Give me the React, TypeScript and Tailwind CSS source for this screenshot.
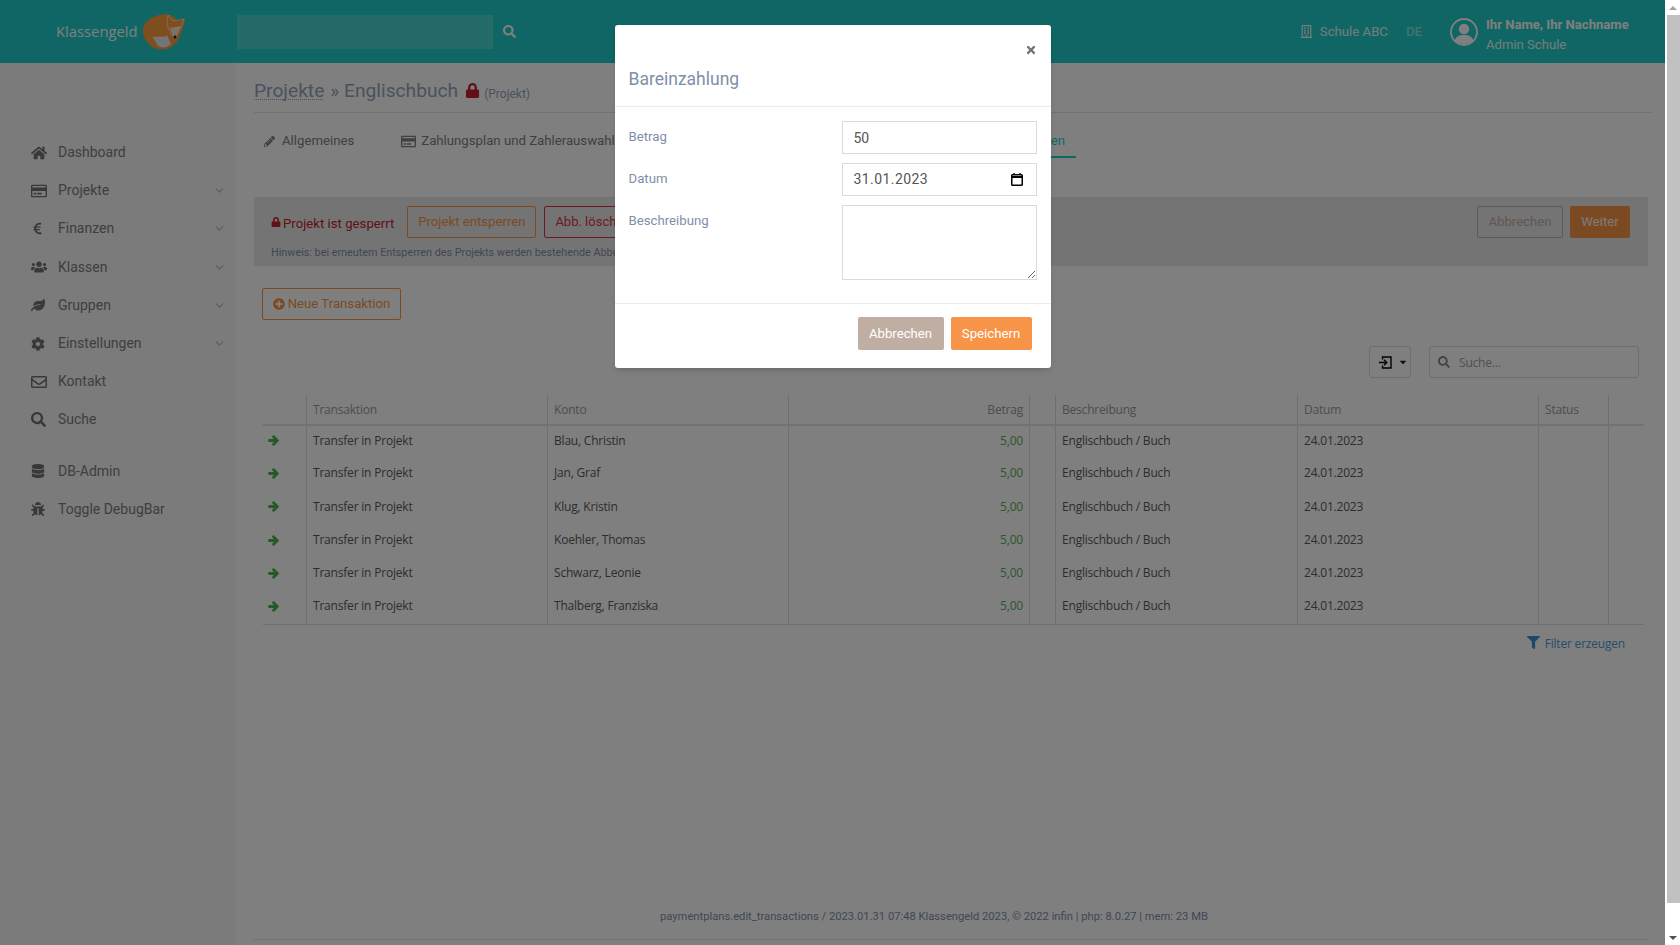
import type { ReactNode } from "react";
import { ChevronDown } from "lucide-react";
import {
  FaArrowRight,
  FaBug,
  FaCaretDown,
  FaCog,
  FaDatabase,
  FaEuroSign,
  FaFilter,
  FaHome,
  FaLeaf,
  FaLock,
  FaPencilAlt,
  FaPlusCircle,
  FaRegBuilding,
  FaRegCreditCard,
  FaRegEnvelope,
  FaSearch,
  FaTimes,
  FaUsers,
} from "react-icons/fa";

const ROBOTO = "font-['Roboto',sans-serif]";

const NAV: { label: string; icon: ReactNode; arrow?: boolean; gap?: boolean }[] = [
  { label: "Dashboard", icon: <FaHome size={16} /> },
  { label: "Projekte", icon: <FaRegCreditCard size={16} />, arrow: true },
  { label: "Finanzen", icon: <FaEuroSign size={13} />, arrow: true },
  { label: "Klassen", icon: <FaUsers size={16} />, arrow: true },
  { label: "Gruppen", icon: <FaLeaf size={14} />, arrow: true },
  { label: "Einstellungen", icon: <FaCog size={14} />, arrow: true },
  { label: "Kontakt", icon: <FaRegEnvelope size={16} /> },
  { label: "Suche", icon: <FaSearch size={15} /> },
  { label: "DB-Admin", icon: <FaDatabase size={14} />, gap: true },
  { label: "Toggle DebugBar", icon: <FaBug size={14} /> },
];

const ROWS = [
  "Blau, Christin",
  "Jan, Graf",
  "Klug, Kristin",
  "Koehler, Thomas",
  "Schwarz, Leonie",
  "Thalberg, Franziska",
];

function FoxLogo() {
  return (
    <svg width="44" height="38" viewBox="0 0 44 38" className="ml-[5px]">
      <path d="M14 3 C24 -1 33 2 35 8 L43 5 C42 14 39 24 33 31 C26 38 15 38 9 33 C3 28 0 22 1 16 C2 10 7 5 14 3 Z" fill="#ff9c3c" />
      <path d="M26 2 L31 8 L42 6 L38 16 L33 25 L29 21 L25 12 Z" fill="#ff9c3c" stroke="#fff" strokeOpacity="0.6" strokeWidth="1" />
      <path d="M28 15 L39 13 L34 25 L31 24 Z" fill="#f7e6d0" />
      <path d="M10 24 C17 22 22 26 25 22 L29 31 C24 36 18 35 15 32 C14 28 12 26 10 24 Z" fill="#e8e8e8" />
      <circle cx="33" cy="24" r="1.4" fill="#222" />
    </svg>
  );
}

function Avatar() {
  return (
    <svg width="28" height="28" viewBox="0 0 28 28">
      <circle cx="14" cy="14" r="13" fill="none" stroke="#ffffff" strokeWidth="1.8" />
      <circle cx="14" cy="11" r="5.2" fill="#ffffff" />
      <path d="M4.5 23 C6 18 9 17 14 17 C19 17 22 18 23.5 23 C20 27 8 27 4.5 23 Z" fill="#ffffff" />
    </svg>
  );
}

function ExportIcon() {
  return (
    <svg width="13" height="13" viewBox="0 0 13 13" fill="none" stroke="#000" strokeWidth="1.4">
      <path d="M3.5 3.5 V1 H12 V12 H3.5 V9.5" />
      <path d="M0 6.5 H7.5 M5 3.8 L7.8 6.5 L5 9.2" />
    </svg>
  );
}

function Header() {
  return (
    <header className="flex h-[63px] shrink-0 items-center bg-[#1eccc8] text-white">
      <span className="ml-[56px] w-[81px] font-['Open_Sans',sans-serif] text-[14.8px] text-white">Klassengeld</span>
      <FoxLogo />
      <div className="ml-[51px] h-[34px] w-[256px] bg-white/20" />
      <FaSearch size={13} className="ml-[10px] text-white" />
      <div className="ml-auto flex items-center">
        <FaRegBuilding size={13} className="text-white/90" />
        <span className="ml-[7px] text-[13.2px] text-white/90">Schule ABC</span>
        <span className="ml-[18px] text-[13.2px] font-medium text-white/50">DE</span>
        <span className="ml-[28px]">
          <Avatar />
        </span>
        <div className="ml-[8px] mr-[37px] flex w-[142px] flex-col gap-[2px] whitespace-nowrap pt-[6px] text-[13.1px] leading-[18px]">
          <span className="font-bold text-white">Ihr Name, Ihr Nachname</span>
          <span className="text-white/90">Admin Schule</span>
        </div>
      </div>
    </header>
  );
}

function Sidebar() {
  return (
    <aside className="w-[236px] shrink-0 bg-[#f6f6f6] pt-[70.5px] text-[#7e7e7e]">
      {NAV.map((item) => (
        <div key={item.label} className={`flex h-[38.2px] items-center pl-[31px] pr-[8px] text-[14px] ${item.gap ? "mt-[13px]" : ""}`}>
          <span className="flex w-[27px] shrink-0 items-center text-[#727272]">{item.icon}</span>
          <span>{item.label}</span>
          {item.arrow && <ChevronDown size={13} strokeWidth={2.5} className="ml-auto mr-[2px] text-[#bbbbbb]" />}
        </div>
      ))}
    </aside>
  );
}

function LockBanner() {
  return (
    <div className="relative mt-[39px] h-[69px] bg-[#e9e9e9] px-[17px] pt-[9px]">
      <div className="flex items-center">
        <FaLock size={10} className="text-[#c0202c]" />
        <span className="ml-[2px] mt-[3px] text-[13.2px] text-[#c0202c]">Projekt ist gesperrt</span>
        <button className="ml-[13px] h-[32px] w-[129px] rounded-[2px] border border-[#f79447] text-[13.2px] text-[#f79447]">Projekt entsperren</button>
        <button className="ml-[8px] h-[32px] whitespace-nowrap rounded-[2px] border border-[#d9343f] px-[10px] text-[13px] text-[#d9343f]">Abb. löschen</button>
        <button className="ml-auto h-[32px] w-[86px] rounded-[2px] border border-[#c0aea3] text-[13.2px] text-[#c0aea3]">Abbrechen</button>
        <button className="ml-[7px] mr-[1px] h-[32px] w-[60px] rounded-[2px] bg-[#f79447] text-[13.2px] text-white/90">Weiter</button>
      </div>
      <p className="mt-[7px] text-[10.8px] leading-[15px] text-[#7e8fa8]">
        Hinweis: bei erneutem Entsperren des Projekts werden bestehende Abbuchungen nicht wiederhergestellt.
      </p>
    </div>
  );
}

function TransactionTable() {
  const td = "border-l border-[#dcdcdc] pb-[3px] pl-[6px] text-[#5a5a5a]";
  const th = "border-l border-[#dcdcdc] pl-[6px] pt-[1px] text-left font-normal text-[#9a9a9a]";
  return (
    <table className="ml-[8.5px] mt-[17px] w-[1381px] table-fixed border-collapse font-['Open_Sans',sans-serif] text-[12px] tracking-[-0.2px]">
      <colgroup>
        <col className="w-[44px]" />
        <col className="w-[241px]" />
        <col className="w-[241px]" />
        <col className="w-[241px]" />
        <col className="w-[26px]" />
        <col className="w-[242px]" />
        <col className="w-[241px]" />
        <col className="w-[70px]" />
        <col className="w-[35px]" />
      </colgroup>
      <thead>
        <tr className="h-[30px] border-b-2 border-[#e2e2e2]">
          <th />
          <th className={th}>Transaktion</th>
          <th className={th}>Konto</th>
          <th className={`${th} pr-[6px] text-right`}>Betrag</th>
          <th className={th} />
          <th className={th}>Beschreibung</th>
          <th className={th}>Datum</th>
          <th className={th}>Status</th>
          <th className={th} />
        </tr>
      </thead>
      <tbody className="border-b border-[#dcdcdc]">
        {ROWS.map((name) => (
          <tr key={name} className="h-[33.3px]">
            <td className="pb-[3px] pl-[5px]">
              <FaArrowRight size={11} stroke="currentColor" strokeWidth={50} className="text-[#4fb04f]" />
            </td>
            <td className={td}>Transfer in Projekt</td>
            <td className={td}>{name}</td>
            <td className={`${td} pr-[6px] text-right text-[#5cae5c]`}>5,00</td>
            <td className={td} />
            <td className={td}>Englischbuch / Buch</td>
            <td className={td}>24.01.2023</td>
            <td className={td} />
            <td className={td} />
          </tr>
        ))}
      </tbody>
    </table>
  );
}

function Content() {
  return (
    <main className="flex min-w-0 flex-1 flex-col pl-[18px]">
      <div className="mr-[13px] flex h-[50px] items-center border-b border-[#e3e3e3] pt-[8px] text-[#93a4bb]">
        <span className="text-[19.2px] underline decoration-dotted decoration-1 underline-offset-2">Projekte</span>
        <span className="ml-[6px] text-[19.2px]">» Englischbuch</span>
        <FaLock size={15} className="ml-[7px] mb-[2px] text-[#c0202c]" />
        <span className="ml-[4px] mt-[5px] text-[12px]">(Projekt)</span>
      </div>

      <div className="relative mt-[17px] flex h-[28px] text-[13.2px] text-[#7e7e7e]">
        <div className="ml-[10px] flex items-center pb-[6px]">
          <FaPencilAlt size={11} />
          <span className="ml-[7px]">Allgemeines</span>
        </div>
        <div className="ml-[47px] flex items-center pb-[6px]">
          <FaRegCreditCard size={15} />
          <span className="ml-[5px]">Zahlungsplan und Zahlerauswahl</span>
        </div>
        <div className="absolute left-[780px] top-0 flex h-[28px] w-[42px] justify-end border-b-2 border-[#1eccc8] pr-[11px] pt-[1px] text-[#1eccc8]">en</div>
      </div>

      <div className="mr-[17px]">
        <LockBanner />
      </div>

      <div className="ml-[8px] mt-[22px]">
        <button className="flex h-[32px] w-[139px] items-center justify-center gap-[3px] rounded-[2px] border border-[#f79447] text-[13.2px] text-[#f79447]">
          <FaPlusCircle size={12} />
          Neue Transaktion
        </button>
      </div>

      <div className="mr-[26px] mt-[26px] flex h-[32px] justify-end">
        <button className="flex w-[42px] items-center justify-center gap-[6px] rounded-[3px] border border-[#dcdcdc] pl-[6px]">
          <ExportIcon />
          <FaCaretDown size={10} className="text-[#222222]" />
        </button>
        <div className="ml-[18px] flex w-[210px] items-center rounded-[3px] border border-[#dcdcdc] pl-[8px] text-[13px] text-[#a0a0a0]">
          <FaSearch size={12} className="text-[#8a8a8a]" />
          <span className="ml-[9px] mt-[1px] font-['Open_Sans',sans-serif] text-[12px] tracking-[-0.2px]">Suche...</span>
        </div>
      </div>

      <TransactionTable />

      <div className="mr-[40px] mt-[9px] flex items-center justify-end font-['Open_Sans',sans-serif] text-[12px] tracking-[-0.2px] text-[#4a9bd8]">
        <FaFilter size={13} className="mb-[2px] text-[#3f8fd0]" />
        <span className="ml-[5px] mt-[1px]">Filter erzeugen</span>
      </div>

      <footer className="mr-[17px] mt-auto h-[30px] border-b border-[#e3e3e3] pl-[406px] text-[11.2px] leading-[14px] text-[#7e8fa8]">
        paymentplans.edit_transactions / 2023.01.31 07:48 Klassengeld 2023, © 2022 infin | php: 8.0.27 | mem: 23 MB
      </footer>
      <div className="h-[5px] shrink-0" />
    </main>
  );
}

function Field({ label, children }: { label: string; children: ReactNode }) {
  return (
    <div className="flex">
      <label className="w-[213px] shrink-0 pt-[7px] text-[13.2px] leading-[18px] text-[#7e8fa8]">{label}</label>
      {children}
    </div>
  );
}

function CalendarIcon() {
  return (
    <svg width="12" height="13" viewBox="0 0 12 13" fill="none" stroke="#000">
      <rect x="0.75" y="1.75" width="10.5" height="10.5" rx="0.8" strokeWidth="1.5" />
      <path d="M0.75 4 H11.25" strokeWidth="2" />
      <path d="M3 0 V2 M9 0 V2" strokeWidth="1.3" />
    </svg>
  );
}

function PaymentModal() {
  const box = "w-[195px] border border-[#d5dbe3] text-[14px] text-[#555555]";
  return (
    <div className="absolute inset-0 flex justify-center bg-black/50 pt-[25px]">
      <div className="h-[343px] w-[436px] rounded-[3px] bg-white shadow-md">
        <div className="relative h-[82px] border-b border-[#e9ecef] pl-[14px] pt-[42px]">
          <h2 className="text-[17.5px] leading-[24px] text-[#7e8fa8]">Bareinzahlung</h2>
          <FaTimes size={12} className="absolute right-[14px] top-[19px] text-[#6f6f6f]" />
        </div>
        <div className="flex h-[197px] flex-col gap-[9px] border-b border-[#e9ecef] pl-[14px] pt-[14px]">
          <Field label="Betrag">
            <input readOnly value="50" className={`${box} h-[33px] px-[11px] outline-none`} />
          </Field>
          <Field label="Datum">
            <div className={`${box} flex h-[33px] items-center justify-between pl-[11px] pr-[13px] tracking-[0.42px]`}>
              31.01.2023
              <CalendarIcon />
            </div>
          </Field>
          <Field label="Beschreibung">
            <textarea readOnly className={`${box} h-[75px] outline-none`} />
          </Field>
        </div>
        <div className="flex justify-end gap-[7px] pr-[19px] pt-[13px]">
          <button className="h-[33px] w-[86px] rounded-[2px] bg-[#c0aea3] text-[13.2px] text-white">Abbrechen</button>
          <button className="h-[33px] w-[81px] rounded-[2px] bg-[#f79447] text-[13.2px] text-white">Speichern</button>
        </div>
      </div>
    </div>
  );
}

function Scrollbar() {
  return (
    <div className="flex w-[15px] shrink-0 flex-col bg-white">
      <div className="flex h-[15px] items-center justify-center">
        <div className="h-0 w-0 border-x-[4px] border-b-[4px] border-x-transparent border-b-[#a3a3a3]" />
      </div>
      <div className="ml-[2px] h-[888px] bg-[#c1c1c1]" />
      <div className="mt-auto flex h-[15px] items-center justify-center">
        <div className="h-0 w-0 border-x-[4px] border-t-[4px] border-x-transparent border-t-[#505050]" />
      </div>
    </div>
  );
}

export default function App() {
  return (
    <div className={`flex h-[945px] w-[1680px] overflow-hidden bg-white ${ROBOTO}`}>
      <div className="relative flex min-w-0 flex-1 flex-col">
        <Header />
        <div className="flex min-h-0 flex-1">
          <Sidebar />
          <Content />
        </div>
        <PaymentModal />
      </div>
      <Scrollbar />
    </div>
  );
}
